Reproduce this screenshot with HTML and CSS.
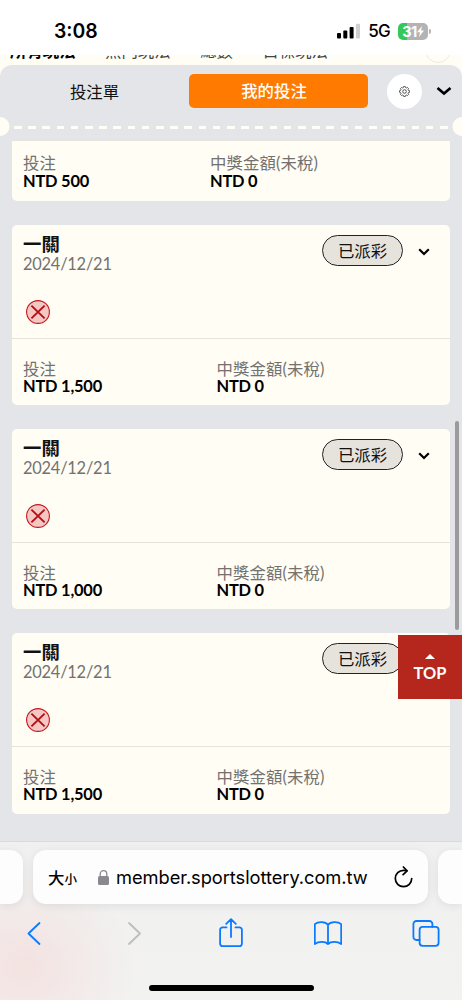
FILE: index.html
```html
<!DOCTYPE html>
<html lang="zh-Hant">
<head>
  <meta charset="UTF-8">
  <meta name="viewport" content="width=device-width, initial-scale=1.0">
  <title>我的投注</title>
  <link rel="stylesheet" href="styles.css">
</head>
<body>
  <!-- Shared icons -->
  <svg class="icon-defs" width="0" height="0">
    <symbol id="icon-lost" viewBox="0 0 24 24">
      <circle cx="12" cy="12" r="11.4" fill="#f3c7c3" stroke="#c5161d" stroke-width="1.1"/>
      <path d="M5.4 5.6l13.2 12.8M18.6 5.6L5.4 18.4" stroke="#b80d14" stroke-width="1.9"/>
    </symbol>
    <symbol id="icon-down" viewBox="0 0 12 8">
      <path d="M1.2 1.2L6 6l4.8-4.8" fill="none" stroke="#000" stroke-width="2.2"/>
    </symbol>
  </svg>

  <div class="phone">
    <!-- Status bar -->
    <header class="status-bar">
      <span class="clock">3:08</span>
      <div class="status-icons">
        <svg width="23" height="16" viewBox="0 0 23 16">
          <rect x="0" y="10" width="4" height="5.5" rx="1"/>
          <rect x="6.3" y="7.4" width="4" height="8.1" rx="1"/>
          <rect x="12.6" y="4" width="4" height="11.5" rx="1"/>
          <rect x="19" y="0.8" width="4" height="14.7" rx="1" fill="#d0d0d0"/>
        </svg>
        <span class="network">5G</span>
        <div class="battery">
          <span>31</span>
          <svg width="7" height="11" viewBox="0 0 7 11"><path d="M5 0L0 6.2h3L2 11l5-6.4H4z" fill="#fff"/></svg>
        </div>
      </div>
    </header>

    <!-- Game menu behind the sheet -->
    <nav class="game-menu">
      <span class="active">所有玩法</span>
      <span>熱門玩法</span>
      <span>總數</span>
      <span>目標玩法</span>
      <i class="menu-more"></i>
    </nav>

    <main class="sheet">
      <div class="tabs">
        <span class="tab">投注單</span>
        <span class="tab selected">我的投注</span>
        <span class="settings">
          <svg width="11" height="11" viewBox="0 0 11 11" fill="none" stroke="#444" stroke-width=".9">
            <path d="M4.6.6h1.8l.3 1.1.7.3 1-.6L9.6 2.6l-.6 1 .3.7 1.1.3v1.8l-1.1.3-.3.7.6 1-1.2 1.2-1-.6-.7.3-.3 1.1H4.6l-.3-1.1-.7-.3-1 .6L1.4 8.4l.6-1-.3-.7L.6 6.4V4.6l1.1-.3.3-.7-.6-1 1.2-1.2 1 .6.7-.3z"/>
            <circle cx="5.5" cy="5.5" r="1.8"/>
          </svg>
        </span>
        <svg class="collapse" width="16" height="10" viewBox="0 0 16 10"><path d="M1.5 2L8 7.6 14.5 2" fill="none" stroke="#000" stroke-width="2.6"/></svg>
      </div>

      <div class="perforation"></div>

      <section class="bets">
        <article class="bet partial">
          <div class="amounts">
            <div><p class="label">投注</p><p class="value">NTD 500</p></div>
            <div><p class="label">中獎金額(未稅)</p><p class="value">NTD 0</p></div>
          </div>
        </article>

        <article class="bet">
          <div class="bet-head">
            <div class="bet-title"><h2>一關</h2><p class="date">2024/12/21</p></div>
            <span class="badge">已派彩</span>
            <svg class="down" width="12" height="8"><use href="#icon-down"/></svg>
          </div>
          <svg class="result" width="24" height="24"><use href="#icon-lost"/></svg>
          <div class="amounts">
            <div><p class="label">投注</p><p class="value">NTD 1,500</p></div>
            <div><p class="label">中獎金額(未稅)</p><p class="value">NTD 0</p></div>
          </div>
        </article>

        <article class="bet">
          <div class="bet-head">
            <div class="bet-title"><h2>一關</h2><p class="date">2024/12/21</p></div>
            <span class="badge">已派彩</span>
            <svg class="down" width="12" height="8"><use href="#icon-down"/></svg>
          </div>
          <svg class="result" width="24" height="24"><use href="#icon-lost"/></svg>
          <div class="amounts">
            <div><p class="label">投注</p><p class="value">NTD 1,000</p></div>
            <div><p class="label">中獎金額(未稅)</p><p class="value">NTD 0</p></div>
          </div>
        </article>

        <article class="bet">
          <div class="bet-head">
            <div class="bet-title"><h2>一關</h2><p class="date">2024/12/21</p></div>
            <span class="badge">已派彩</span>
          </div>
          <svg class="result" width="24" height="24"><use href="#icon-lost"/></svg>
          <div class="amounts">
            <div><p class="label">投注</p><p class="value">NTD 1,500</p></div>
            <div><p class="label">中獎金額(未稅)</p><p class="value">NTD 0</p></div>
          </div>
        </article>
      </section>
    </main>

    <div class="scrollbar"></div>
    <a class="top-button"><i></i>TOP</a>

    <!-- Browser controls -->
    <footer class="browser">
      <div class="address-row">
        <div class="side-tab left"></div>
        <div class="address">
          <span class="text-size">大<small>小</small></span>
          <svg class="lock" width="11" height="15" viewBox="0 0 11 15">
            <rect x="0" y="6" width="11" height="9" rx="1.6" fill="#8a8a8e"/>
            <path d="M2.2 6.5V4a3.3 3.3 0 0 1 6.6 0v2.5" fill="none" stroke="#8a8a8e" stroke-width="1.3"/>
          </svg>
          <span class="url">member.sportslottery.com.tw</span>
          <svg class="reload" width="20" height="22" viewBox="0 0 20 22" fill="none" stroke="#000" stroke-width="1.7" stroke-linecap="round" stroke-linejoin="round">
            <path d="M18.7 12.5a8.2 8.2 0 1 1-8.2-8.2q1.7 0 3.2.4"/>
            <path d="M10.4 1l3.7 3.9-4 3.8"/>
          </svg>
        </div>
        <div class="side-tab right"></div>
      </div>
      <div class="toolbar">
        <svg width="28" height="30" viewBox="0 0 28 30"><path d="M18.5 5L7.5 15.5l11 10.500"/></svg>
        <svg class="disabled" width="28" height="30" viewBox="0 0 28 30"><path d="M10 5l11 10.500L10 26"/></svg>
        <svg width="28" height="30" viewBox="0 0 28 30"><path d="M9.500 9.400h-4a2.400 2.400 0 0 0-2.400 2.400v14a2.400 2.400 0 0 0 2.400 2.400h17a2.400 2.400 0 0 0 2.400-2.400v-14a2.400 2.400 0 0 0-2.400-2.400h-4M14 19V1.400M9.200 5.800L14 1.200l4.800 4.600"/></svg>
        <svg width="28" height="30" viewBox="0 0 28 30"><path d="M14 6.800C11.500 3.300 4 3.200.8 6.200V26c4-2.900 10.500-2.600 13.200 0 2.700-2.600 9.200-2.900 13.200 0V6.200C24 3.200 16.500 3.300 14 6.800zM14 6.800V26"/></svg>
        <svg width="28" height="30" viewBox="0 0 28 30"><rect x="7.6" y="8.8" width="19" height="19" rx="3"/><path d="M7.600 22H4.400a3 3 0 0 1-3-3V6a3 3 0 0 1 3-3h13a3 3 0 0 1 3 3v2.800"/></svg>
      </div>
      <div class="home-indicator"></div>
    </footer>
  </div>
</body>
</html>
```

FILE: styles.css
```css
* {
  box-sizing: border-box;
}
body {
  margin: 0;
  font-family: Lato, "Noto Sans CJK TC", sans-serif;
  font-size: 16.4px;
  color: #111;
}
h2, p {
  margin: 0;
}
svg {
  display: block;
  flex: none;
}
.icon-defs {
  position: absolute;
}
.phone {
  position: relative;
  display: flex;
  flex-direction: column;
  width: 462px;
  height: 1000px;
  overflow: hidden;
  background: #fffdf4;
}

/* status bar */
.status-bar {
  display: flex;
  justify-content: space-between;
  height: 55px;
  padding: 19px 34px 0 54px;
  background: #fff;
  font-family: Inter, sans-serif;
  color: #000;
}
.clock {
  font-size: 19.4px;
  font-weight: 600;
  line-height: 24px;
}
.status-icons {
  display: flex;
  align-items: center;
  height: 24px;
}
.network {
  margin: 0 8px 0 8px;
  font-size: 17px;
  font-weight: 500;
  letter-spacing: -0.7px;
}
.battery {
  position: relative;
  display: flex;
  align-items: center;
  justify-content: center;
  width: 30px;
  height: 17px;
  border-radius: 5px;
  background: linear-gradient(90deg, #34c759 31%, #b3b3b3 31%);
  color: #fff;
  font-size: 14.5px;
  font-weight: 700;
  letter-spacing: -0.5px;
}
.battery::after {
  content: "";
  position: absolute;
  right: -3px;
  top: 6px;
  width: 2px;
  height: 5px;
  border-radius: 0 2px 2px 0;
  background: #b3b3b3;
}

/* menu, mostly scrolled away */
.game-menu {
  display: flex;
  align-items: flex-end;
  gap: 29.5px;
  height: 10px;
  padding: 0 10px 4.5px;
  overflow: hidden;
  color: #444;
  line-height: 20px;
  white-space: nowrap;
}
.game-menu span {
  flex: none;
}
.game-menu .active {
  color: #000;
  font-weight: 700;
}
.menu-more {
  flex: none;
  width: 26px;
  height: 26px;
  margin: 0 0 -2px 68px;
  border: 1px solid #eeeae4;
  border-radius: 50%;
}

/* bet slip sheet */
.sheet {
  height: 776px;
  border-radius: 12px 12px 0 0;
  background: #e4e5e8;
  overflow: hidden;
}
.tabs {
  display: flex;
  align-items: center;
  height: 52px;
  padding-right: 10.5px;
}
.tab {
  width: 189px;
  line-height: 33px;
  text-align: center;
}
.tab.selected {
  width: 179px;
  height: 33.5px;
  padding-right: 9px;
  border-radius: 5px;
  background: #ff7a00;
  color: #fff;
  font-weight: 500;
}
.settings {
  display: flex;
  align-items: center;
  justify-content: center;
  width: 35px;
  height: 35px;
  margin-left: 19px;
  border-radius: 50%;
  background: #fff;
}
.collapse {
  margin-left: auto;
}
.perforation {
  height: 19px;
  background:
    radial-gradient(circle at 0 50%, #fffdf4 9px, transparent 9.8px),
    radial-gradient(circle at 100% 50%, #fffdf4 9px, transparent 9.8px),
    repeating-linear-gradient(90deg, #fffdf4 0 7.6px, transparent 7.6px 14.2px) 14px 9px / 434px 3px no-repeat;
}
.bets {
  display: flex;
  flex-direction: column;
  gap: 24px;
  padding: 4px 12px 0;
}
.bet {
  height: 180.2px;
  border-radius: 5px;
  background: #fffdf4;
}
.bet.partial {
  height: 61px;
  border-radius: 0 0 5px 5px;
}
.bet-head {
  display: flex;
  height: 74.5px;
  padding: 10px 19px 0 11px;
}
.bet-title {
  flex: none;
  width: 299px;
  margin-top: -1px;
}
.bet-title h2 {
  font-size: 18.4px;
  font-weight: 700;
  line-height: 20px;
}
.date {
  color: #737270;
  line-height: 19px;
  letter-spacing: -0.22px;
}
.badge {
  flex: none;
  width: 81px;
  height: 31px;
  border: 1.3px solid #222;
  border-radius: 16px;
  background: #e6e3dc;
  line-height: 29px;
  text-align: center;
}
.down {
  margin: 13px 0 0 15px;
}
.result {
  margin-left: 14px;
}
.amounts {
  display: flex;
  height: 67px;
  margin-top: 14.5px;
  padding: 21px 11px 0;
  border-top: 1px solid #e6e3dc;
}
.amounts > div:first-child {
  width: 193.5px;
}
.label {
  color: #737270;
  line-height: 17px;
  letter-spacing: 0.1px;
}
.value {
  color: #000;
  font-weight: 700;
  line-height: 18px;
  letter-spacing: -0.2px;
}
.partial .amounts {
  margin: 0;
  padding-top: 14px;
}
.partial .amounts > div:first-child {
  width: 187px;
}
.partial .label {
  line-height: 16px;
}
.partial .value {
  line-height: 20px;
}

/* overlays */
.scrollbar {
  position: absolute;
  right: 3px;
  top: 421px;
  width: 4px;
  height: 209px;
  border-radius: 2px;
  background: #9b9b9d;
}
.top-button {
  position: absolute;
  right: 0;
  top: 634.5px;
  display: flex;
  flex-direction: column;
  align-items: center;
  width: 64px;
  height: 64px;
  padding-top: 19px;
  background: #b5261c;
  color: #fff;
  font-weight: 700;
  line-height: 27px;
}
.top-button i {
  border: 5px solid transparent;
  border-top: 0;
  border-bottom-color: #fff;
}

/* browser controls */
.browser {
  height: 159px;
  padding-top: 8px;
  border-top: 1px solid #dadadc;
  background:
    radial-gradient(110px 100px at 25px 125px, rgba(244, 216, 214, 0.6), rgba(244, 216, 214, 0)),
    linear-gradient(#f0f0f0, #f2f2f1);
}
.address-row {
  display: flex;
  gap: 10px;
}
.side-tab, .address {
  height: 54px;
  border-radius: 13px;
  background: #fdfdfd;
  box-shadow: 0 2px 10px rgba(0, 0, 0, 0.08);
}
.side-tab.left {
  width: 23px;
  border-radius: 0 13px 13px 0;
}
.side-tab.right {
  width: 24px;
  border-radius: 13px 0 0 13px;
}
.address {
  display: flex;
  align-items: center;
  width: 395px;
  padding: 0 15px;
  color: #000;
}
.text-size {
  width: 50px;
  font-weight: 500;
  white-space: nowrap;
}
.text-size small {
  font-size: 12.5px;
}
.url {
  width: 252px;
  margin-left: 7px;
  font-family: Inter, sans-serif;
  font-size: 18.3px;
  letter-spacing: -0.06px;
  white-space: nowrap;
}
.reload {
  margin-left: auto;
}
.toolbar {
  display: flex;
  justify-content: space-between;
  padding: 14px 22px 0 21px;
  fill: none;
  stroke: #0a7aff;
  stroke-width: 1.8;
  stroke-linecap: round;
  stroke-linejoin: round;
}
.toolbar .disabled {
  stroke: #bdbdbd;
}
.home-indicator {
  width: 165px;
  height: 6px;
  margin: 36.5px auto 0;
  border-radius: 3px;
  background: #000;
}
```
